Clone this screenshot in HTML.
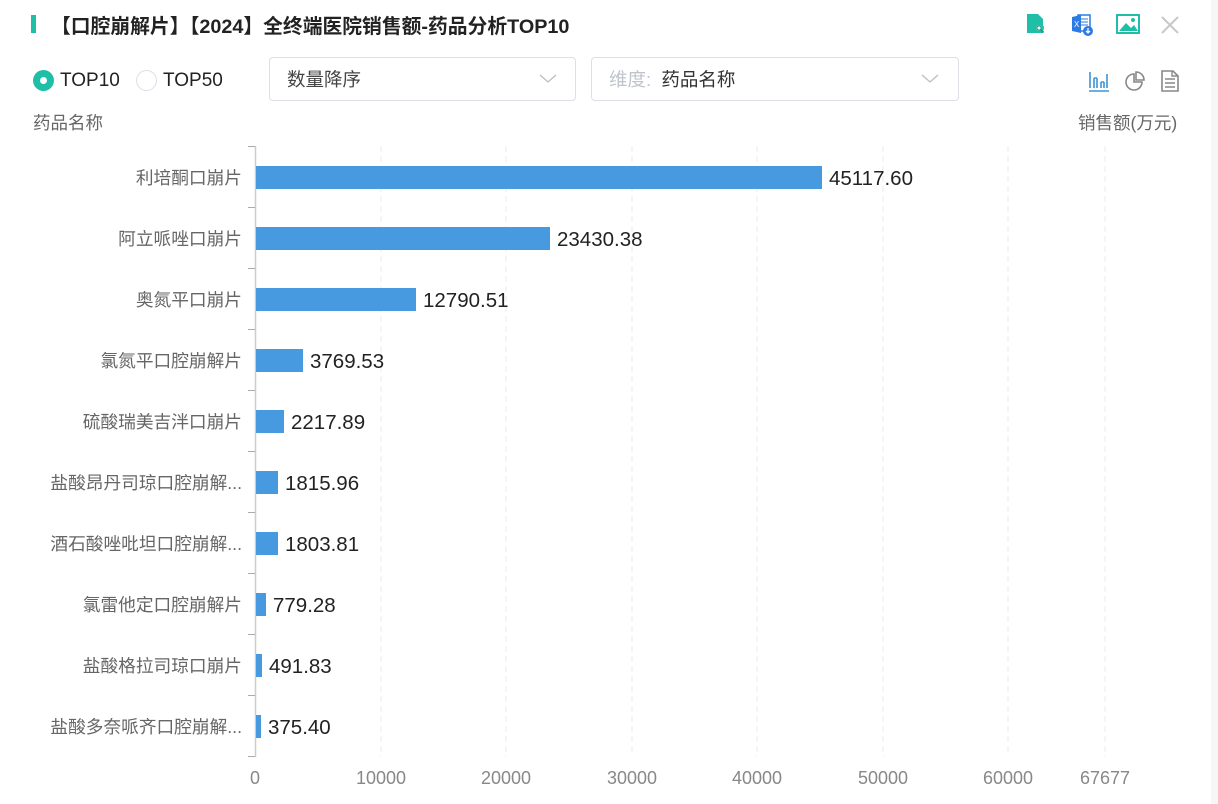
<!DOCTYPE html>
<html><head><meta charset="utf-8"><style>
*{margin:0;padding:0;box-sizing:border-box}
body{width:1218px;height:804px;background:#fff;position:relative;overflow:hidden;font-family:"Liberation Sans","Noto Sans CJK SC",sans-serif;color:#333}
.strip{position:absolute;left:1211px;top:0;width:7px;height:804px;background:#f5f6f8}
.a{position:absolute;white-space:nowrap}
.sel{position:absolute;top:57px;height:44px;border:1px solid #dcdfe6;border-radius:4px;background:#fff}
</style></head><body>
<div class="strip"></div>
<div class="a" style="left:31px;top:15px;width:5px;height:18px;background:#1fbfa7"></div>
<div class="a" style="left:51px;top:10px;font-size:19.8px;font-weight:bold;color:#222">【口腔崩解片】【2024】全终端医院销售额-药品分析TOP10</div>
<svg class="a" style="left:1025px;top:12px" width="24" height="24" viewBox="0 0 24 24"><path d="M2 2h11l5 5v14H2z" fill="#1fbfa7"/><circle cx="14" cy="16" r="4" fill="#fff" stroke="#1fbfa7" stroke-width="2"/><circle cx="14" cy="16" r="2.2" fill="#fff" stroke="#1a9c8a" stroke-width="1.3"/><path d="M15.5 17.5l3 3" stroke="#1a9c8a" stroke-width="1.8"/></svg>
<svg class="a" style="left:1070px;top:12px" width="26" height="26" viewBox="0 0 26 26"><rect x="8" y="3" width="12" height="16" fill="#fff" stroke="#2c7be5" stroke-width="1.5"/><path d="M11 7h7M11 10h7M11 13h7" stroke="#2c7be5"/><path d="M2 5l9-2v18l-9-2z" fill="#2c7be5"/><text x="4" y="15" font-size="8" fill="#fff" font-family="Liberation Sans">X</text><circle cx="18" cy="19" r="5" fill="#2c7be5"/><path d="M18 16v5M16 19l2 2 2-2" stroke="#fff" stroke-width="1.3" fill="none"/></svg>
<svg class="a" style="left:1116px;top:14px" width="24" height="20" viewBox="0 0 24 20"><rect x="1" y="1" width="22" height="18" fill="none" stroke="#1fbfa7" stroke-width="2"/><path d="M3 17l7-8 5 5 3-3 4 6z" fill="#1fbfa7"/><circle cx="17" cy="6" r="2" fill="#1fbfa7"/></svg>
<svg class="a" style="left:1160px;top:15px" width="20" height="20" viewBox="0 0 20 20"><path d="M2 2l16 16M18 2L2 18" stroke="#c8c8c8" stroke-width="2"/></svg>
<div class="a" style="left:33px;top:70px;width:21px;height:21px;border-radius:50%;background:#1fbfa7"></div>
<div class="a" style="left:40px;top:77px;width:7px;height:7px;border-radius:50%;background:#fff"></div>
<div class="a" style="left:60px;top:70px;font-size:19px;color:#222">TOP10</div>
<div class="a" style="left:136px;top:70px;width:21px;height:21px;border-radius:50%;border:1px solid #dcdfe6"></div>
<div class="a" style="left:163px;top:70px;font-size:19px;color:#222">TOP50</div>
<div class="sel" style="left:269px;width:307px"></div>
<div class="a" style="left:287px;top:66px;font-size:18.5px;color:#444">数量降序</div>
<svg class="a" style="left:539px;top:73px" width="18" height="12"><path d="M1 2l8 7 8-7" stroke="#bbb" fill="none" stroke-width="1.2"/></svg>
<div class="sel" style="left:591px;width:368px"></div>
<div class="a" style="left:609px;top:66px;font-size:18.5px"><span style="color:#c0c4cc">维度:</span><span style="color:#333">&nbsp;&nbsp;药品名称</span></div>
<svg class="a" style="left:921px;top:73px" width="18" height="12"><path d="M1 2l8 7 8-7" stroke="#bbb" fill="none" stroke-width="1.2"/></svg>
<svg class="a" style="left:1087px;top:70px" width="24" height="24" viewBox="0 0 24 24"><path d="M3 2v16M7 8v10M10 8v10M7 8h3M14 12v6M17 12v6M14 12h3M20 4v14" stroke="#3e94d6" stroke-width="1.6" fill="none"/><path d="M2 21h20" stroke="#3e94d6" stroke-width="1.6"/></svg>
<svg class="a" style="left:1124px;top:71px" width="22" height="22" viewBox="0 0 22 22"><path d="M10 3a8 8 0 1 0 8 8h-8z" fill="none" stroke="#888" stroke-width="1.6"/><path d="M12 1v8h8a8 8 0 0 0-8-8z" fill="none" stroke="#888" stroke-width="1.6"/></svg>
<svg class="a" style="left:1160px;top:70px" width="20" height="22" viewBox="0 0 20 22"><path d="M2 1h11l5 5v15H2z" fill="none" stroke="#888" stroke-width="1.6"/><path d="M5 9h10M5 13h10M5 17h10M12 1v5h6" stroke="#888" stroke-width="1.4" fill="none"/></svg>
<div class="a" style="left:33px;top:110px;font-size:17.5px;color:#666">药品名称</div>
<div class="a" style="left:1078px;top:110px;font-size:17.5px;color:#666">销售额(万元)</div>
<svg class="a" style="left:0;top:0" width="1210" height="804" font-family="Liberation Sans, Noto Sans CJK SC, sans-serif">
<g stroke="#eef0f2" stroke-dasharray="6,4" stroke-width="1.3">
<path d="M381 146V757M506 146V757M632 146V757M757 146V757M883 146V757M1008 146V757M1105 146V757"/>
</g>
<path d="M255.5 146V757" stroke="#ccc" stroke-width="1.5"/>
<g stroke="#aaa"><path d="M248 146.5h7M248 207.5h7M248 268.5h7M248 329.5h7M248 390.5h7M248 451.5h7M248 512.5h7M248 573.5h7M248 634.5h7M248 695.5h7M248 756.5h7"/></g>
<g fill="#4799e0">
<rect x="256" y="166" width="566" height="23"/>
<rect x="256" y="227" width="294" height="23"/>
<rect x="256" y="288" width="160" height="23"/>
<rect x="256" y="349" width="47" height="23"/>
<rect x="256" y="410" width="28" height="23"/>
<rect x="256" y="471" width="22" height="23"/>
<rect x="256" y="532" width="22" height="23"/>
<rect x="256" y="593" width="10" height="23"/>
<rect x="256" y="654" width="6" height="23"/>
<rect x="256" y="715" width="5" height="23"/>
</g>
<g font-size="20.5" fill="#222">
<text x="829" y="185">45117.60</text>
<text x="557" y="246">23430.38</text>
<text x="423" y="307">12790.51</text>
<text x="310" y="368">3769.53</text>
<text x="291" y="429">2217.89</text>
<text x="285" y="490">1815.96</text>
<text x="285" y="551">1803.81</text>
<text x="273" y="612">779.28</text>
<text x="269" y="673">491.83</text>
<text x="268" y="734">375.40</text>
</g>
<g font-size="17.7" fill="#666" text-anchor="end">
<text x="242" y="184">利培酮口崩片</text>
<text x="242" y="245">阿立哌唑口崩片</text>
<text x="242" y="306">奥氮平口崩片</text>
<text x="242" y="367">氯氮平口腔崩解片</text>
<text x="242" y="428">硫酸瑞美吉泮口崩片</text>
<text x="242" y="489">盐酸昂丹司琼口腔崩解...</text>
<text x="242" y="550">酒石酸唑吡坦口腔崩解...</text>
<text x="242" y="611">氯雷他定口腔崩解片</text>
<text x="242" y="672">盐酸格拉司琼口崩片</text>
<text x="242" y="733">盐酸多奈哌齐口腔崩解...</text>
</g>
<g font-size="18" fill="#888" text-anchor="middle">
<text x="255" y="784">0</text><text x="381" y="784">10000</text><text x="506" y="784">20000</text><text x="632" y="784">30000</text><text x="757" y="784">40000</text><text x="883" y="784">50000</text><text x="1008" y="784">60000</text><text x="1105" y="784">67677</text>
</g>
</svg>
</body></html>
